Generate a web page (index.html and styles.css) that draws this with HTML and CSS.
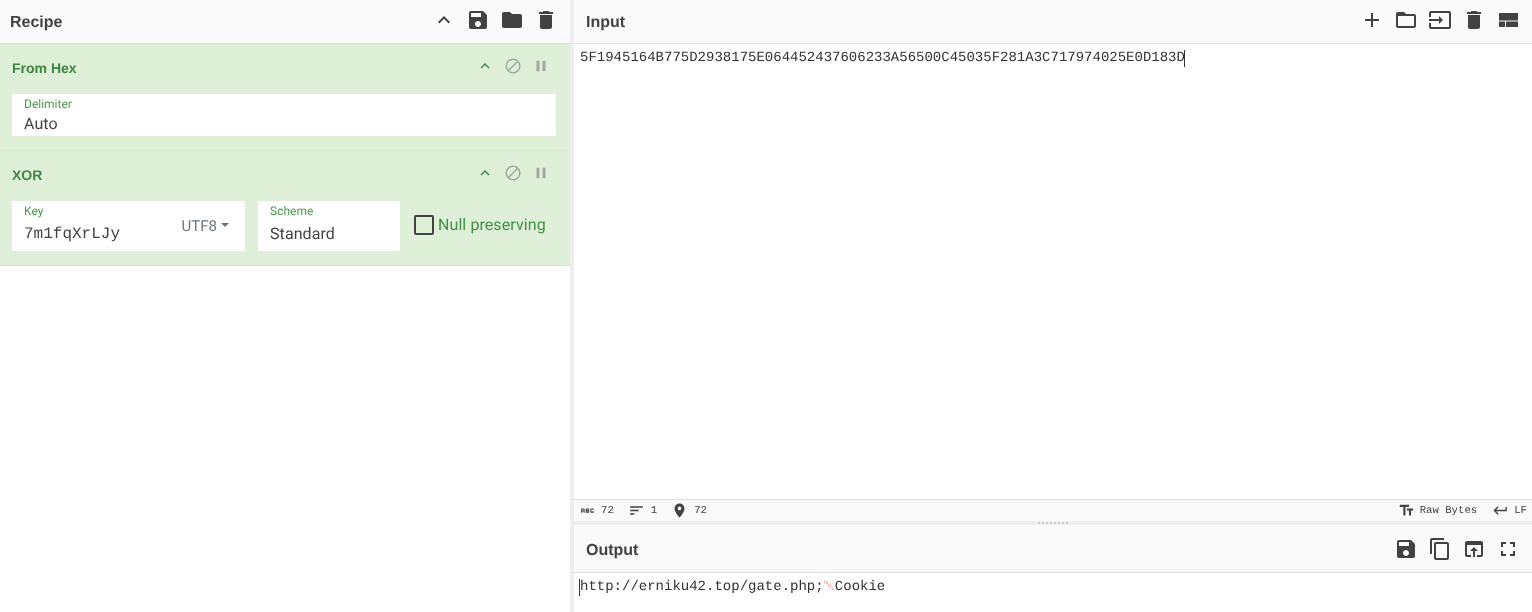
FILE: index.html
```html
<!DOCTYPE html>
<html lang="en">
<head>
<meta charset="utf-8">
<title>CyberChef</title>
<link rel="stylesheet" href="styles.css">
</head>
<body>
<div class="app">
  <section class="recipe">
    <header class="title-bar recipe-bar">
      <h2 class="title">Recipe</h2>
      <div class="actions recipe-actions">
        <svg class="icon" viewBox="0 0 24 24"><path d="M7.41 15.41L12 10.83l4.59 4.58L18 14l-6-6-6 6z"/></svg>
        <svg class="icon" viewBox="0 0 24 24"><path d="M17 3H5c-1.11 0-2 .9-2 2v14c0 1.1.89 2 2 2h14c1.1 0 2-.9 2-2V7l-4-4zm-5 16c-1.66 0-3-1.34-3-3s1.34-3 3-3 3 1.34 3 3-1.34 3-3 3zm3-10H5V5h10v4z"/></svg>
        <svg class="icon" viewBox="0 0 24 24"><path d="M10 4H4c-1.1 0-1.99.9-1.99 2L2 18c0 1.1.9 2 2 2h16c1.1 0 2-.9 2-2V8c0-1.1-.9-2-2-2h-8l-2-2z"/></svg>
        <svg class="icon" viewBox="0 0 24 24"><path d="M6 19c0 1.1.9 2 2 2h8c1.1 0 2-.9 2-2V7H6v12zM19 4h-3.5l-1-1h-5l-1 1H5v2h14V4z"/></svg>
      </div>
    </header>

    <article class="op op-hex">
      <div class="op-head">
        <h3 class="op-name">From Hex</h3>
        <div class="op-controls">
          <svg class="op-icon op-up" viewBox="0 0 24 24"><path d="M7.41 15.41L12 10.83l4.59 4.58L18 14l-6-6-6 6z"/></svg>
          <svg class="op-icon" viewBox="0 0 24 24"><path d="M12 2C6.48 2 2 6.48 2 12s4.48 10 10 10 10-4.48 10-10S17.52 2 12 2zM4 12c0-4.42 3.58-8 8-8 1.85 0 3.55.63 4.9 1.69L5.69 16.9C4.63 15.55 4 13.85 4 12zm8 8c-1.85 0-3.55-.63-4.9-1.69L18.31 7.1C19.37 8.45 20 10.15 20 12c0 4.42-3.58 8-8 8z"/></svg>
          <svg class="op-icon" viewBox="0 0 24 24"><path d="M6 19h4V5H6v14zm8-14v14h4V5h-4z"/></svg>
        </div>
      </div>
      <div class="field field-wide">
        <label class="field-label">Delimiter</label>
        <div class="field-value auto-value">Auto</div>
      </div>
    </article>

    <article class="op op-xor">
      <div class="op-head">
        <h3 class="op-name">XOR</h3>
        <div class="op-controls">
          <svg class="op-icon op-up" viewBox="0 0 24 24"><path d="M7.41 15.41L12 10.83l4.59 4.58L18 14l-6-6-6 6z"/></svg>
          <svg class="op-icon" viewBox="0 0 24 24"><path d="M12 2C6.48 2 2 6.48 2 12s4.48 10 10 10 10-4.48 10-10S17.52 2 12 2zM4 12c0-4.42 3.58-8 8-8 1.85 0 3.55.63 4.9 1.69L5.69 16.9C4.63 15.55 4 13.85 4 12zm8 8c-1.85 0-3.55-.63-4.9-1.69L18.31 7.1C19.37 8.45 20 10.15 20 12c0 4.42-3.58 8-8 8z"/></svg>
          <svg class="op-icon" viewBox="0 0 24 24"><path d="M6 19h4V5H6v14zm8-14v14h4V5h-4z"/></svg>
        </div>
      </div>
      <div class="xor-row">
        <div class="field field-key">
          <div class="key-main">
            <label class="field-label">Key</label>
            <div class="field-value mono-value">7m1fqXrLJy</div>
          </div>
          <div class="encoding">UTF8<span class="caret"></span></div>
        </div>
        <div class="field field-scheme">
          <label class="field-label">Scheme</label>
          <div class="field-value scheme-value">Standard</div>
        </div>
        <div class="check">
          <span class="check-box"></span>
          <span class="check-label">Null preserving</span>
        </div>
      </div>
    </article>
  </section>

  <div class="gutter"></div>

  <main class="io">
    <section class="input">
      <header class="title-bar">
        <h2 class="title title-io">Input</h2>
        <div class="actions io-actions">
          <svg class="icon" viewBox="0 0 24 24"><path d="M19 13h-6v6h-2v-6H5v-2h6V5h2v6h6v2z"/></svg>
          <svg class="icon" viewBox="0 0 24 24"><path d="M20 6h-8l-2-2H4c-1.1 0-1.99.9-1.99 2L2 18c0 1.1.9 2 2 2h16c1.1 0 2-.9 2-2V8c0-1.1-.9-2-2-2zm0 12H4V8h16v10z"/></svg>
          <svg class="icon" viewBox="0 0 24 24"><path d="M21 3.01H3c-1.1 0-2 .9-2 2V9h2V4.99h18v14.03H3V15H1v4.01c0 1.1.9 1.98 2 1.98h18c1.1 0 2-.88 2-1.98v-14c0-1.11-.9-2-2-2zM11 16l4-4-4-4v3H1v2h10v3z"/></svg>
          <svg class="icon" viewBox="0 0 24 24"><path d="M6 19c0 1.1.9 2 2 2h8c1.1 0 2-.9 2-2V7H6v12zM19 4h-3.5l-1-1h-5l-1 1H5v2h14V4z"/></svg>
          <svg class="icon" viewBox="0 0 24 24"><path d="M3 5h19v7.5H3zM3 13.5h6V19H3zM10 13.5h12V19H10z"/></svg>
        </div>
      </header>
      <div class="editor input-editor"><span class="code">5F1945164B775D2938175E064452437606233A56500C45035F281A3C717974025E0D183D</span><span class="cursor"></span></div>
      <footer class="status">
        <div class="status-group">
          <span class="stat stat-len"><svg class="stat-icon" viewBox="0 0 24 24"><path d="M21 11h-1.5v-.5h-2v3h2V13H21v1c0 .55-.45 1-1 1h-3c-.55 0-1-.45-1-1v-4c0-.55.45-1 1-1h3c.55 0 1 .45 1 1v1zM8 10v5H6.5v-1.5h-2V15H3v-5c0-.55.45-1 1-1h3c.55 0 1 .45 1 1zm-1.5.5h-2V12h2v-1.5zm7 1.5c.55 0 1 .45 1 1v1c0 .55-.45 1-1 1h-4V9h4c.55 0 1 .45 1 1v1c0 .55-.45 1-1 1zM11 10.5v.75h2v-.75h-2zm2 2.25h-2v.75h2v-.75z"/></svg>72</span>
          <span class="stat stat-lines"><svg class="stat-icon" viewBox="0 0 24 24"><path d="M3 18h6v-2H3v2zM3 6v2h18V6H3zm0 7h12v-2H3v2z"/></svg>1</span>
          <span class="stat stat-pos"><svg class="stat-icon" viewBox="0 0 24 24"><path d="M12 2C8.13 2 5 5.13 5 9c0 5.25 7 13 7 13s7-7.75 7-13c0-3.87-3.13-7-7-7zm0 9.5c-1.38 0-2.5-1.12-2.5-2.5s1.12-2.5 2.5-2.5 2.5 1.12 2.5 2.5-1.12 2.5-2.5 2.5z"/></svg>72</span>
        </div>
        <div class="status-group status-right">
          <span class="stat stat-enc"><svg class="stat-icon" viewBox="0 0 24 24"><path d="M2.5 4v3h5v12h3V7h5V4h-13zm19 5h-9v3h3v7h3v-7h3V9z"/></svg>Raw Bytes</span>
          <span class="stat stat-eol"><svg class="stat-icon" viewBox="0 0 24 24"><path d="M19 7v4H5.83l3.58-3.59L8 6l-6 6 6 6 1.41-1.41L5.83 13H21V7z"/></svg>LF</span>
        </div>
      </footer>
    </section>

    <div class="splitter"><span class="grip"></span></div>

    <section class="output">
      <header class="title-bar output-bar">
        <h2 class="title title-io title-output">Output</h2>
        <div class="actions output-actions">
          <svg class="icon" viewBox="0 0 24 24"><path d="M17 3H5c-1.11 0-2 .9-2 2v14c0 1.1.89 2 2 2h14c1.1 0 2-.9 2-2V7l-4-4zm-5 16c-1.66 0-3-1.34-3-3s1.34-3 3-3 3 1.34 3 3-1.34 3-3 3zm3-10H5V5h10v4z"/></svg>
          <svg class="icon" viewBox="0 0 24 24"><path d="M16 1H4c-1.1 0-2 .9-2 2v14h2V3h12V1zm3 4H8c-1.1 0-2 .9-2 2v14c0 1.1.9 2 2 2h11c1.1 0 2-.9 2-2V7c0-1.1-.9-2-2-2zm0 16H8V7h11v14z"/></svg>
          <svg class="icon" viewBox="0 0 24 24"><path d="M19 4H5c-1.11 0-2 .9-2 2v12c0 1.1.89 2 2 2h4v-2H5V8h14v10h-4v2h4c1.1 0 2-.9 2-2V6c0-1.1-.89-2-2-2zm-7 6l-4 4h3v6h2v-6h3l-4-4z"/></svg>
          <svg class="icon" viewBox="0 0 24 24"><path d="M7 14H5v5h5v-2H7v-3zm-2-4h2V7h3V5H5v5zm12 7h-3v2h5v-5h-2v3zM14 5v2h3v3h2V5h-5z"/></svg>
        </div>
      </header>
      <div class="editor output-editor"><span class="cursor cursor-start"></span><span class="code">http://erniku42.top/gate.php;<span class="special">␀</span>Cookie</span></div>
    </section>
  </main>
</div>
</body>
</html>
```
FILE: styles.css
```css
* { box-sizing: border-box; }
html, body { margin: 0; height: 100%; overflow: hidden; }
body { font-family: Roboto, "Liberation Sans", sans-serif; color: #333; background: #fff; text-rendering: geometricPrecision; }
.app { display: flex; width: 1532px; height: 612px; will-change: transform; }

.recipe { width: 570px; flex: none; }
.gutter { width: 4px; flex: none; background: #eeeeee; }
.io { flex: 1; min-width: 0; display: flex; flex-direction: column; }

.title-bar { height: 44px; display: flex; align-items: center; justify-content: space-between; background: #fafafa; border-bottom: 1px solid #dddddd; padding: 0 12px; flex: none; }
.recipe-bar { padding: 0 12px 0 10px; }
.title { margin: 2px 0 0; font: bold 16px "Liberation Sans", Arial, sans-serif; color: #424242; }
.title-output { margin-top: 4px; }
.actions { display: flex; align-items: center; gap: 10px; }
.icon { display: block; width: 24px; height: 24px; fill: #424242; }
.recipe-actions { margin-top: -3px; }
.io-actions { margin-top: -3px; }

.op { background: #dff0d8; border-bottom: 1px solid #d4e8cb; padding: 0 14px 0 12px; color: #3c763d; }
.op-hex { height: 107px; }
.op-xor { height: 115px; }
.op-head { height: 50px; display: flex; align-items: center; justify-content: space-between; padding-bottom: 2px; }
.op-name { margin: 0; font: bold 14px "Liberation Sans", Arial, sans-serif; color: #3f8642; }
.op-controls { display: flex; align-items: center; gap: 10px; margin: -4px 6px 0 0; }
.op-icon { display: block; width: 18px; height: 18px; fill: #a4a8a4; }
.op-up { fill: #3f8642; }

.field { background: #fff; border-radius: 2px; padding: 0 12px; }
.field-wide { height: 42px; }
.field-label { display: block; font-size: 12px; line-height: 14px; color: #4a9b4d; padding-top: 3px; height: 17px; }
.field-value { font-size: 16px; line-height: 24px; color: #424242; letter-spacing: .08px; }
.auto-value { margin-top: 1px; }

.xor-row { display: flex; align-items: flex-start; margin-right: -14px; }
.field-key { width: 233px; height: 50px; display: flex; justify-content: space-between; padding-right: 16px; }
.mono-value { font-family: "Liberation Mono", monospace; margin-top: 4px; letter-spacing: 0; }
.encoding { font-size: 15px; color: #6c757d; padding-top: 16px; line-height: 18px; display: flex; align-items: flex-start; }
.caret { width: 0; height: 0; margin: 6px 0 0 4px; border-top: 4px solid #6c757d; border-left: 4px solid transparent; border-right: 4px solid transparent; }
.field-scheme { width: 142px; height: 50px; margin-left: 13px; }
.scheme-value { margin-top: 4px; }
.check { display: flex; align-items: center; margin: 13px 0 0 14px; }
.check-box { width: 20px; height: 20px; border: 2px solid #424242; border-radius: 2px; margin-right: 4px; }
.check-label { font-size: 16px; line-height: 22px; color: #3d9140; letter-spacing: .08px; }

.input { flex: 1; min-height: 0; display: flex; flex-direction: column; }
.editor { font: 14px/17px "Liberation Mono", "DejaVu Sans", monospace; color: #333; padding-left: 6px; white-space: pre; }
.input-editor { flex: 1; padding-top: 6px; }
.code { vertical-align: top; }
.cursor { display: inline-block; width: 1px; height: 17px; margin-left: -1px; background: #333; vertical-align: top; }

.status { height: 22px; flex: none; background: #fafafa; border-top: 1px solid #dddddd; display: flex; justify-content: space-between; padding: 0 5px; font: 10.67px/21px "Liberation Mono", monospace; color: #424242; }
.status-group { display: flex; }
.status-right { gap: 15px; }
.stat { display: flex; align-items: center; padding-top: 2px; }
.stat-icon { width: 17px; height: 17px; fill: #424242; margin: 0 5px 2px 0; }
.stat-lines { margin-left: 14px; }
.stat-lines .stat-icon, .stat-pos .stat-icon { margin-right: 6px; }
.stat-pos { margin-left: 14px; }

.splitter { height: 4px; flex: none; background: #eeeeee; display: flex; justify-content: center; align-items: center; }
.grip { width: 30px; height: 2px; background: repeating-linear-gradient(90deg, #cccccc 0 2px, transparent 2px 4px); }

.output-bar { height: 48px; }
.output-editor { height: 39px; padding-top: 6px; }
.special { color: #ff6b6b; }
```
